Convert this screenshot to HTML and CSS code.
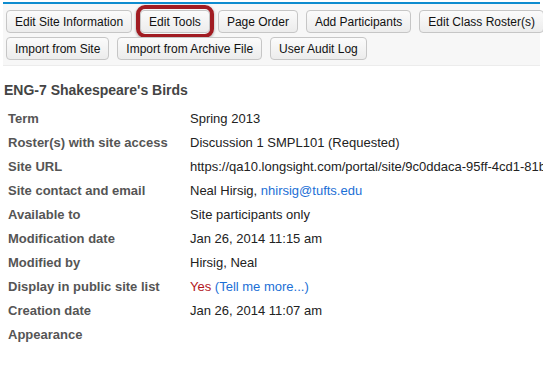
FILE: index.html
```html
<!DOCTYPE html>
<html lang="en">
<head>
    <meta charset="UTF-8">
    <meta name="viewport" content="width=device-width, initial-scale=1.0">
    <title>Site Info</title>
    <link rel="stylesheet" href="styles.css">
</head>
<body>
    <div class="toolbar">
        <div class="btn-row">
            <button class="btn">Edit Site Information</button>
            <button class="btn highlighted">Edit Tools</button>
            <button class="btn">Page Order</button>
            <button class="btn">Add Participants</button>
            <button class="btn">Edit Class Roster(s)</button>
        </div>
        <div class="btn-row">
            <button class="btn">Import from Site</button>
            <button class="btn">Import from Archive File</button>
            <button class="btn">User Audit Log</button>
        </div>
    </div>

    <h1 class="site-title">ENG-7 Shakespeare's Birds</h1>

    <div class="info-grid">
        <div class="label">Term</div>
        <div class="value">Spring 2013</div>

        <div class="label">Roster(s) with site access</div>
        <div class="value">Discussion 1 SMPL101 (Requested)</div>

        <div class="label">Site URL</div>
        <div class="value">https://qa10.longsight.com/portal/site/9c0ddaca-95ff-4cd1-81b3</div>

        <div class="label">Site contact and email</div>
        <div class="value">Neal Hirsig, <a href="#">nhirsig@tufts.edu</a></div>

        <div class="label">Available to</div>
        <div class="value">Site participants only</div>

        <div class="label">Modification date</div>
        <div class="value">Jan 26, 2014 11:15 am</div>

        <div class="label">Modified by</div>
        <div class="value">Hirsig, Neal</div>

        <div class="label">Display in public site list</div>
        <div class="value"><span class="yes">Yes</span> <a href="#">(Tell me more...)</a></div>

        <div class="label">Creation date</div>
        <div class="value">Jan 26, 2014 11:07 am</div>

        <div class="label">Appearance</div>
        <div class="value"></div>
    </div>
</body>
</html>
```

FILE: styles.css
```css
body {
    margin: 0;
    font-family: "Liberation Sans", Arial, sans-serif;
    background-color: #fff;
    color: #222;
    overflow: hidden;
}

.toolbar {
    margin: 2px 3px 0 3px;
    border-top: 2px solid #0e8ccf;
    border-bottom: 1px solid #ececec;
    background-color: #f7f7f7;
    padding: 6px 0 5px 3px;
    display: flex;
    flex-direction: column;
    gap: 4px;
}

.btn-row {
    display: flex;
    gap: 8px;
}

.btn {
    position: relative;
    height: 23px;
    padding: 0 8px;
    font-family: "Liberation Sans", Arial, sans-serif;
    font-size: 12px;
    color: #111;
    background: linear-gradient(#fbfbfb, #ececec);
    border: 1px solid #c6c6c6;
    border-radius: 4px;
    white-space: nowrap;
}

.highlighted::after {
    content: "";
    position: absolute;
    top: -6px;
    left: -5px;
    right: -5px;
    bottom: -6px;
    border: 4px solid #a11c22;
    border-radius: 9px;
    box-shadow: 0 1px 3px rgba(0, 0, 0, 0.35);
}

.site-title {
    margin: 15px 0 8px 4px;
    font-size: 14px;
    line-height: 18px;
    color: #444;
}

.info-grid {
    display: grid;
    grid-template-columns: 182px 1fr;
    padding-left: 8px;
    font-size: 13px;
    line-height: 24px;
}

.label {
    font-weight: bold;
    color: #555;
}

.value {
    white-space: nowrap;
}

.value a {
    color: #1b6fd6;
    text-decoration: none;
}

.yes {
    color: #b3171d;
}
```
